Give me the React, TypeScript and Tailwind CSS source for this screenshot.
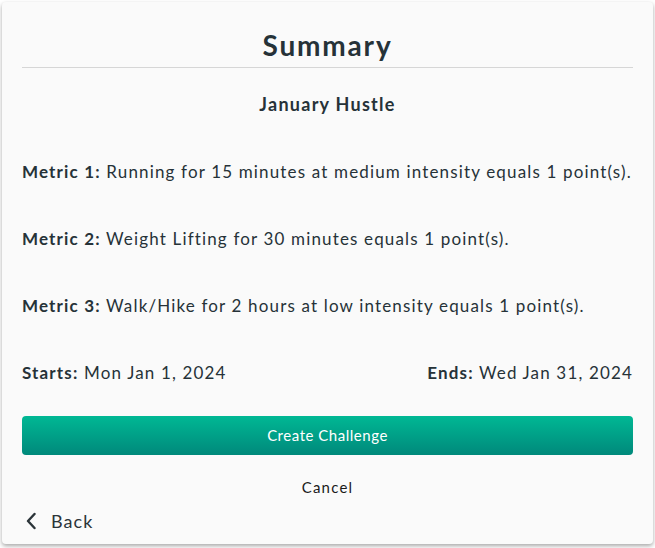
import React from 'react';

const metrics = [
  'Running for 15 minutes at medium intensity equals 1 point(s).',
  'Weight Lifting for 30 minutes equals 1 point(s).',
  'Walk/Hike for 2 hours at low intensity equals 1 point(s).',
];

export default function App() {
  return (
    <div className="min-h-screen bg-white p-[2px] font-['Lato',sans-serif] text-[#263238]">
      <div className="flex h-[542px] flex-col rounded-[4px] bg-[#fafafa] px-5 shadow-[0_2px_4px_rgba(0,0,0,0.35)]">
        <h1 className="pt-[26px] text-center text-[28px] font-bold leading-[34px] tracking-[0.065em]">Summary</h1>
        <div className="mt-[5px] h-px bg-[#d6d6d6]" />
        <h2 className="mt-[25px] text-center text-[18px] font-bold leading-[22px] tracking-[0.07em]">January Hustle</h2>

        <div className="mt-[46px] flex flex-col gap-[45px] text-[17px] leading-[22px] tracking-[0.068em]">
          {metrics.map((m, i) => (
            <p key={i}>
              <span className="font-bold">Metric {i + 1}:</span> {m}
            </p>
          ))}
        </div>

        <div className="mt-[45px] flex justify-between text-[17px] leading-[22px] tracking-[0.068em]">
          <p>
            <span className="font-bold">Starts:</span> Mon Jan 1, 2024
          </p>
          <p>
            <span className="font-bold">Ends:</span> Wed Jan 31, 2024
          </p>
        </div>

        <button className="mt-[32px] h-[39px] w-full rounded-[4px] bg-gradient-to-b from-[#00b894] to-[#00897b] text-[15px] tracking-[0.035em] text-white">
          Create Challenge
        </button>

        <button className="mt-[22px] self-center text-[15px] leading-[20px] tracking-[0.08em] text-[#1a1a1a]">Cancel</button>

        <button className="mt-[12px] flex items-center gap-[15px] self-start pl-[4px] text-[18px] leading-[24px] tracking-[0.06em] text-[#2b3439]">
          <svg width="10" height="18" viewBox="0 0 10 18" fill="none" stroke="currentColor" strokeWidth="2.4" strokeLinecap="round" strokeLinejoin="round">
            <path d="M8.5 2 L2 9 L8.5 16" />
          </svg>
          Back
        </button>
      </div>
    </div>
  );
}
